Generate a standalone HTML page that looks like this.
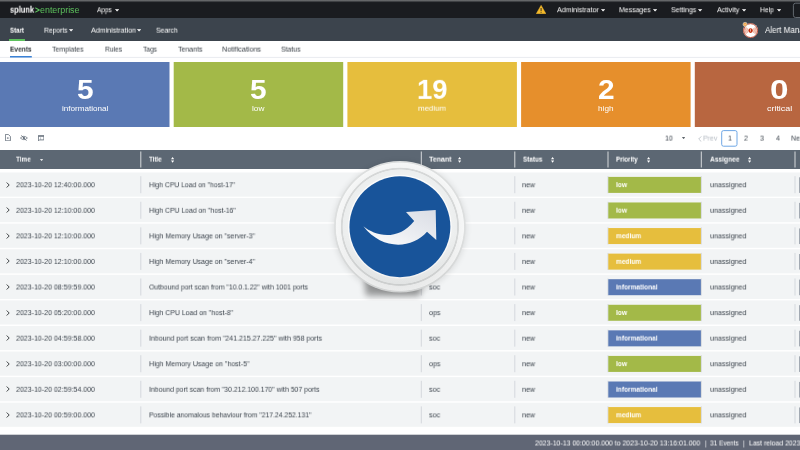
<!DOCTYPE html>
<html lang="en"><head><meta charset="utf-8"><title>Alert Manager</title><style>
html,body{margin:0;padding:0}
body{width:800px;height:450px;overflow:hidden;position:relative;background:#fff;font-family:"Liberation Sans",sans-serif;}
.r{position:absolute;display:block}
.t{position:absolute;white-space:nowrap;line-height:12px;height:12px;font-size:7.5px;transform-origin:0 50%;will-change:transform;}
</style></head>
<body>
<svg class="r" style="left:0;top:0" width="800" height="450" viewBox="0 0 800 450"><defs><linearGradient id="tg" x1="0" y1="0" x2="0" y2="1"><stop offset="0" stop-color="#77797b"/><stop offset="1" stop-color="#25272b"/></linearGradient></defs>
<rect x="0" y="0" width="800" height="18" fill="#1a1c20"/>
<rect x="0" y="0" width="800" height="2.2" fill="url(#tg)"/>
<rect x="793.4" y="3.2" width="12" height="14.3" fill="#1a1c20" rx="2.2" stroke="#6b7278" stroke-width="0.9"/>
<rect x="0" y="18" width="800" height="23" fill="#3c444d"/>
<rect x="9" y="39" width="16" height="2" fill="#5cc05c"/>
<rect x="0" y="41" width="800" height="17" fill="#fff"/>
<rect x="0" y="56.9" width="800" height="1" fill="#e9ecf0"/>
<rect x="10" y="56" width="21.8" height="1.5" fill="#3b82d6"/>
<rect x="0.0" y="62" width="169.5" height="65" fill="#5a79b4"/>
<rect x="173.7" y="62" width="169.5" height="65" fill="#a3b948"/>
<rect x="347.4" y="62" width="169.5" height="65" fill="#e6be3d"/>
<rect x="521.1" y="62" width="169.5" height="65" fill="#e68f2c"/>
<rect x="694.8" y="62" width="169.5" height="65" fill="#b86640"/>
<rect x="721.7" y="130.6" width="15.3" height="15.6" fill="#fff" rx="1.8" stroke="#5f9de2" stroke-width="0.9"/>
<rect x="0" y="150" width="800" height="19" fill="#5c6773"/>
<rect x="140.3" y="151.5" width="1" height="16" fill="rgba(255,255,255,.75)"/>
<rect x="420.8" y="151.5" width="1" height="16" fill="rgba(255,255,255,.75)"/>
<rect x="514.3" y="151.5" width="1" height="16" fill="rgba(255,255,255,.75)"/>
<rect x="607.5" y="151.5" width="1" height="16" fill="rgba(255,255,255,.75)"/>
<rect x="700.8" y="151.5" width="1" height="16" fill="rgba(255,255,255,.75)"/>
<rect x="794.5" y="151.5" width="1" height="16" fill="rgba(255,255,255,.75)"/>
<rect x="0" y="172.5" width="800" height="24.15" fill="#f2f4f5"/>
<rect x="140.3" y="176.2" width="1" height="17" fill="#d4d8dd"/>
<rect x="420.8" y="176.2" width="1" height="17" fill="#d4d8dd"/>
<rect x="514.3" y="176.2" width="1" height="17" fill="#d4d8dd"/>
<rect x="607.5" y="176.2" width="1" height="17" fill="#d4d8dd"/>
<rect x="700.8" y="176.2" width="1" height="17" fill="#d4d8dd"/>
<rect x="794.5" y="176.2" width="1" height="17" fill="#d4d8dd"/>
<rect x="608.3" y="176.9" width="92.6" height="16" fill="#a3b948"/>
<rect x="799.2" y="177.3" width="2" height="15.6" fill="#8f98a3"/>
<rect x="0" y="198.07" width="800" height="24.15" fill="#f2f4f5"/>
<rect x="140.3" y="201.76999999999998" width="1" height="17" fill="#d4d8dd"/>
<rect x="420.8" y="201.76999999999998" width="1" height="17" fill="#d4d8dd"/>
<rect x="514.3" y="201.76999999999998" width="1" height="17" fill="#d4d8dd"/>
<rect x="607.5" y="201.76999999999998" width="1" height="17" fill="#d4d8dd"/>
<rect x="700.8" y="201.76999999999998" width="1" height="17" fill="#d4d8dd"/>
<rect x="794.5" y="201.76999999999998" width="1" height="17" fill="#d4d8dd"/>
<rect x="608.3" y="202.47" width="92.6" height="16" fill="#a3b948"/>
<rect x="799.2" y="202.87" width="2" height="15.6" fill="#8f98a3"/>
<rect x="0" y="223.65" width="800" height="24.15" fill="#f2f4f5"/>
<rect x="140.3" y="227.35" width="1" height="17" fill="#d4d8dd"/>
<rect x="420.8" y="227.35" width="1" height="17" fill="#d4d8dd"/>
<rect x="514.3" y="227.35" width="1" height="17" fill="#d4d8dd"/>
<rect x="607.5" y="227.35" width="1" height="17" fill="#d4d8dd"/>
<rect x="700.8" y="227.35" width="1" height="17" fill="#d4d8dd"/>
<rect x="794.5" y="227.35" width="1" height="17" fill="#d4d8dd"/>
<rect x="608.3" y="228.05" width="92.6" height="16" fill="#e6be3d"/>
<rect x="799.2" y="228.45000000000002" width="2" height="15.6" fill="#8f98a3"/>
<rect x="0" y="249.22" width="800" height="24.15" fill="#f2f4f5"/>
<rect x="140.3" y="252.92000000000002" width="1" height="17" fill="#d4d8dd"/>
<rect x="420.8" y="252.92000000000002" width="1" height="17" fill="#d4d8dd"/>
<rect x="514.3" y="252.92000000000002" width="1" height="17" fill="#d4d8dd"/>
<rect x="607.5" y="252.92000000000002" width="1" height="17" fill="#d4d8dd"/>
<rect x="700.8" y="252.92000000000002" width="1" height="17" fill="#d4d8dd"/>
<rect x="794.5" y="252.92000000000002" width="1" height="17" fill="#d4d8dd"/>
<rect x="608.3" y="253.62" width="92.6" height="16" fill="#e6be3d"/>
<rect x="799.2" y="254.02" width="2" height="15.6" fill="#8f98a3"/>
<rect x="0" y="274.8" width="800" height="24.15" fill="#f2f4f5"/>
<rect x="140.3" y="278.5" width="1" height="17" fill="#d4d8dd"/>
<rect x="420.8" y="278.5" width="1" height="17" fill="#d4d8dd"/>
<rect x="514.3" y="278.5" width="1" height="17" fill="#d4d8dd"/>
<rect x="607.5" y="278.5" width="1" height="17" fill="#d4d8dd"/>
<rect x="700.8" y="278.5" width="1" height="17" fill="#d4d8dd"/>
<rect x="794.5" y="278.5" width="1" height="17" fill="#d4d8dd"/>
<rect x="608.3" y="279.2" width="92.6" height="16" fill="#5a79b4"/>
<rect x="799.2" y="279.6" width="2" height="15.6" fill="#8f98a3"/>
<rect x="0" y="300.38" width="800" height="24.15" fill="#f2f4f5"/>
<rect x="140.3" y="304.08" width="1" height="17" fill="#d4d8dd"/>
<rect x="420.8" y="304.08" width="1" height="17" fill="#d4d8dd"/>
<rect x="514.3" y="304.08" width="1" height="17" fill="#d4d8dd"/>
<rect x="607.5" y="304.08" width="1" height="17" fill="#d4d8dd"/>
<rect x="700.8" y="304.08" width="1" height="17" fill="#d4d8dd"/>
<rect x="794.5" y="304.08" width="1" height="17" fill="#d4d8dd"/>
<rect x="608.3" y="304.78" width="92.6" height="16" fill="#a3b948"/>
<rect x="799.2" y="305.18" width="2" height="15.6" fill="#8f98a3"/>
<rect x="0" y="325.95" width="800" height="24.15" fill="#f2f4f5"/>
<rect x="140.3" y="329.65" width="1" height="17" fill="#d4d8dd"/>
<rect x="420.8" y="329.65" width="1" height="17" fill="#d4d8dd"/>
<rect x="514.3" y="329.65" width="1" height="17" fill="#d4d8dd"/>
<rect x="607.5" y="329.65" width="1" height="17" fill="#d4d8dd"/>
<rect x="700.8" y="329.65" width="1" height="17" fill="#d4d8dd"/>
<rect x="794.5" y="329.65" width="1" height="17" fill="#d4d8dd"/>
<rect x="608.3" y="330.35" width="92.6" height="16" fill="#5a79b4"/>
<rect x="799.2" y="330.75" width="2" height="15.6" fill="#8f98a3"/>
<rect x="0" y="351.52" width="800" height="24.15" fill="#f2f4f5"/>
<rect x="140.3" y="355.21999999999997" width="1" height="17" fill="#d4d8dd"/>
<rect x="420.8" y="355.21999999999997" width="1" height="17" fill="#d4d8dd"/>
<rect x="514.3" y="355.21999999999997" width="1" height="17" fill="#d4d8dd"/>
<rect x="607.5" y="355.21999999999997" width="1" height="17" fill="#d4d8dd"/>
<rect x="700.8" y="355.21999999999997" width="1" height="17" fill="#d4d8dd"/>
<rect x="794.5" y="355.21999999999997" width="1" height="17" fill="#d4d8dd"/>
<rect x="608.3" y="355.92" width="92.6" height="16" fill="#a3b948"/>
<rect x="799.2" y="356.32" width="2" height="15.6" fill="#8f98a3"/>
<rect x="0" y="377.1" width="800" height="24.15" fill="#f2f4f5"/>
<rect x="140.3" y="380.8" width="1" height="17" fill="#d4d8dd"/>
<rect x="420.8" y="380.8" width="1" height="17" fill="#d4d8dd"/>
<rect x="514.3" y="380.8" width="1" height="17" fill="#d4d8dd"/>
<rect x="607.5" y="380.8" width="1" height="17" fill="#d4d8dd"/>
<rect x="700.8" y="380.8" width="1" height="17" fill="#d4d8dd"/>
<rect x="794.5" y="380.8" width="1" height="17" fill="#d4d8dd"/>
<rect x="608.3" y="381.5" width="92.6" height="16" fill="#5a79b4"/>
<rect x="799.2" y="381.90000000000003" width="2" height="15.6" fill="#8f98a3"/>
<rect x="0" y="402.67" width="800" height="24.15" fill="#f2f4f5"/>
<rect x="140.3" y="406.37" width="1" height="17" fill="#d4d8dd"/>
<rect x="420.8" y="406.37" width="1" height="17" fill="#d4d8dd"/>
<rect x="514.3" y="406.37" width="1" height="17" fill="#d4d8dd"/>
<rect x="607.5" y="406.37" width="1" height="17" fill="#d4d8dd"/>
<rect x="700.8" y="406.37" width="1" height="17" fill="#d4d8dd"/>
<rect x="794.5" y="406.37" width="1" height="17" fill="#d4d8dd"/>
<rect x="608.3" y="407.07" width="92.6" height="16" fill="#e6be3d"/>
<rect x="799.2" y="407.47" width="2" height="15.6" fill="#8f98a3"/>
<rect x="0" y="434.7" width="800" height="16" fill="#606675"/>
</svg>
<div class="t " style="left:10.2px;top:3px;transform:translateY(0.65px) scaleX(0.8757);font-size:8.5px;color:#fff;font-weight:700;">splunk</div>
<svg class="r" style="left:35px;top:7px" width="5" height="6" viewBox="0 0 5 6"><path d="M0.3 0.3L4.7 2.6V3.4L0.3 5.7V4.5L3.2 3L0.3 1.5z" fill="#5cc05c"/></svg>
<div class="t " style="left:40px;top:3px;transform:translateY(0.68px) scaleX(1.0446);font-size:8.5px;color:#5cc05c;font-weight:400;">enterprise</div>
<div class="t " style="left:97px;top:4px;transform:translateY(0.2px) scaleX(0.8621);font-size:7.5px;color:#fff;">Apps</div>
<svg class="r" style="left:114.9px;top:9.0px" width="4.2" height="2.6" viewBox="0 0 4.2 2.6"><path d="M0.5 0.4h3.2L2.1 2.2z" fill="#fff" stroke="#fff" stroke-width="0.6" stroke-linejoin="round"/></svg>
<svg class="r" style="left:536px;top:4.6px" width="10.2" height="9" viewBox="0 0 10.2 9"><path d="M5.1 0.2L10 8.8H0.2z" fill="#f4b92a" stroke="#f4b92a" stroke-width="0.4" stroke-linejoin="round"/><path d="M4.6 3h1v3H4.6zM4.6 6.7h1v1H4.6z" fill="#3a3320"/></svg>
<div class="t " style="left:556.8px;top:4px;transform:translateY(0.2px) scaleX(0.946);font-size:7.5px;color:#fff;">Administrator</div>
<svg class="r" style="left:601.1px;top:9.0px" width="4.2" height="2.6" viewBox="0 0 4.2 2.6"><path d="M0.5 0.4h3.2L2.1 2.2z" fill="#fff" stroke="#fff" stroke-width="0.6" stroke-linejoin="round"/></svg>
<div class="t " style="left:619.2px;top:4px;transform:translateY(0.2px) scaleX(0.9243);font-size:7.5px;color:#fff;">Messages</div>
<svg class="r" style="left:652.8px;top:9.0px" width="4.2" height="2.6" viewBox="0 0 4.2 2.6"><path d="M0.5 0.4h3.2L2.1 2.2z" fill="#fff" stroke="#fff" stroke-width="0.6" stroke-linejoin="round"/></svg>
<div class="t " style="left:671.2px;top:4px;transform:translateY(0.2px) scaleX(0.9333);font-size:7.5px;color:#fff;">Settings</div>
<svg class="r" style="left:698.4px;top:9.0px" width="4.2" height="2.6" viewBox="0 0 4.2 2.6"><path d="M0.5 0.4h3.2L2.1 2.2z" fill="#fff" stroke="#fff" stroke-width="0.6" stroke-linejoin="round"/></svg>
<div class="t " style="left:716.9px;top:4px;transform:translateY(0.2px) scaleX(0.9341);font-size:7.5px;color:#fff;">Activity</div>
<svg class="r" style="left:741.6999999999999px;top:9.0px" width="4.2" height="2.6" viewBox="0 0 4.2 2.6"><path d="M0.5 0.4h3.2L2.1 2.2z" fill="#fff" stroke="#fff" stroke-width="0.6" stroke-linejoin="round"/></svg>
<div class="t " style="left:760px;top:4px;transform:translateY(0.2px) scaleX(0.8939);font-size:7.5px;color:#fff;">Help</div>
<svg class="r" style="left:776.6px;top:9.0px" width="4.2" height="2.6" viewBox="0 0 4.2 2.6"><path d="M0.5 0.4h3.2L2.1 2.2z" fill="#fff" stroke="#fff" stroke-width="0.6" stroke-linejoin="round"/></svg>
<div class="t " style="left:10.2px;top:24px;transform:translateY(0.65px) scaleX(0.819);font-size:7.5px;color:#fff;font-weight:700;">Start</div>
<div class="t " style="left:44px;top:24px;transform:translateY(0.65px) scaleX(0.8947);font-size:7.5px;color:#fff;">Reports</div>
<svg class="r" style="left:69.10000000000001px;top:29.4px" width="4.2" height="2.6" viewBox="0 0 4.2 2.6"><path d="M0.5 0.4h3.2L2.1 2.2z" fill="#fff" stroke="#fff" stroke-width="0.6" stroke-linejoin="round"/></svg>
<div class="t " style="left:90.7px;top:24px;transform:translateY(0.65px) scaleX(0.9467);font-size:7.5px;color:#fff;">Administration</div>
<svg class="r" style="left:136.9px;top:29.4px" width="4.2" height="2.6" viewBox="0 0 4.2 2.6"><path d="M0.5 0.4h3.2L2.1 2.2z" fill="#fff" stroke="#fff" stroke-width="0.6" stroke-linejoin="round"/></svg>
<div class="t " style="left:156.2px;top:24px;transform:translateY(0.65px) scaleX(0.9173);font-size:7.5px;color:#fff;">Search</div>
<svg class="r" style="left:741px;top:21px" width="19" height="19" viewBox="0 0 19 19">
<circle cx="9.6" cy="9.6" r="7.4" fill="#fff"/>
<path d="M9.6 9.6L3.9 5.4A7 7 0 0 0 3.9 13.8zM9.6 9.6L15.3 5.4A7 7 0 0 1 15.3 13.8z" fill="#f6d5cb"/>
<path d="M5.3 6.4A5.3 5.3 0 0 0 5.3 12.8M13.9 6.4A5.3 5.3 0 0 1 13.9 12.8M6.7 7.4A3.6 3.6 0 0 0 6.7 11.8M12.5 7.4A3.6 3.6 0 0 1 12.5 11.8" fill="none" stroke="#e29c88" stroke-width="0.7"/>
<circle cx="9.6" cy="9.6" r="6.95" fill="none" stroke="#b5402a" stroke-width="0.95"/>
<ellipse cx="9.6" cy="9.6" rx="2.1" ry="2.3" fill="#c6300f"/>
<rect x="9.3" y="8.1" width="0.6" height="1.9" fill="#fff"/><rect x="9.3" y="10.4" width="0.6" height="0.6" fill="#fff"/>
<circle cx="4.1" cy="3.4" r="2.1" fill="#f2a64a" stroke="#cfd5db" stroke-width="0.6"/>
<path d="M3.2 3.4L3.9 4.1L5.1 2.8" fill="none" stroke="#fbe3c3" stroke-width="0.5"/>
</svg>
<div class="t " style="left:765px;top:23px;transform:translateY(0.88px) scaleX(0.944);font-size:8.5px;color:#fff;">Alert Manager</div>
<div class="t " style="left:10.2px;top:43px;transform:translateY(0.6px) scaleX(0.8737);font-size:7.5px;color:#2b3033;font-weight:700;">Events</div>
<div class="t " style="left:52.4px;top:43px;transform:translateY(0.6px) scaleX(0.9214);font-size:7.5px;color:#333a41;">Templates</div>
<div class="t " style="left:104.7px;top:43px;transform:translateY(0.6px) scaleX(0.886);font-size:7.5px;color:#333a41;">Rules</div>
<div class="t " style="left:142.7px;top:43px;transform:translateY(0.6px) scaleX(0.8836);font-size:7.5px;color:#333a41;">Tags</div>
<div class="t " style="left:177.6px;top:43px;transform:translateY(0.6px) scaleX(0.9322);font-size:7.5px;color:#333a41;">Tenants</div>
<div class="t " style="left:222px;top:43px;transform:translateY(0.6px) scaleX(0.9545);font-size:7.5px;color:#333a41;">Notifications</div>
<div class="t " style="left:281.4px;top:43px;transform:translateY(0.6px) scaleX(0.9217);font-size:7.5px;color:#333a41;">Status</div>
<div class="t " style="left:76.6px;top:83px;transform:translateY(0.82px) scaleX(1.0852);font-size:27.5px;color:#fff;font-weight:700;">5</div>
<div class="t " style="left:61.7px;top:102px;transform:translateY(0.7px) scaleX(1.0128);font-size:8px;color:#fff;font-weight:400;">informational</div>
<div class="t " style="left:250.3px;top:83px;transform:translateY(0.82px) scaleX(1.0852);font-size:27.5px;color:#fff;font-weight:700;">5</div>
<div class="t " style="left:252.4px;top:102px;transform:translateY(0.7px) scaleX(1.032);font-size:8px;color:#fff;font-weight:400;">low</div>
<div class="t " style="left:417.05px;top:83px;transform:translateY(0.82px) scaleX(0.9969);font-size:27.5px;color:#fff;font-weight:700;">19</div>
<div class="t " style="left:418.3px;top:102px;transform:translateY(0.7px) scaleX(0.9841);font-size:8px;color:#fff;font-weight:400;">medium</div>
<div class="t " style="left:597.7px;top:83px;transform:translateY(0.82px) scaleX(1.0852);font-size:27.5px;color:#fff;font-weight:700;">2</div>
<div class="t " style="left:598.25px;top:102px;transform:translateY(0.7px) scaleX(1.0248);font-size:8px;color:#fff;font-weight:400;">high</div>
<div class="t " style="left:770.45px;top:83px;transform:translateY(0.82px) scaleX(1.2094);font-size:27.5px;color:#fff;font-weight:700;">0</div>
<div class="t " style="left:767.1px;top:102px;transform:translateY(0.7px) scaleX(1.1115);font-size:8px;color:#fff;font-weight:400;">critical</div>
<svg class="r" style="left:5px;top:134.2px" width="5.8" height="7.2" viewBox="0 0 5.8 7.2"><path d="M0.4 0.4H3.3L5.4 2.5V6.8H0.4z" fill="none" stroke="#5c6773" stroke-width="0.8" stroke-linejoin="round"/><path d="M2.8 3.2v1.8M1.9 4.1h1.8" stroke="#5c6773" stroke-width="0.6"/></svg>
<svg class="r" style="left:20.3px;top:135px" width="7.8" height="6" viewBox="0 0 7.8 6"><path d="M0.4 3Q3.9 -0.4 7.4 3Q3.9 6.4 0.4 3z" fill="none" stroke="#5c6773" stroke-width="0.7"/><circle cx="3.9" cy="3" r="1.1" fill="#5c6773"/><path d="M1.3 0.3L6.6 5.8" stroke="#5c6773" stroke-width="0.7"/></svg>
<svg class="r" style="left:37.8px;top:135px" width="6.4" height="6.4" viewBox="0 0 6.4 6.4"><path d="M0.4 0.4H5.9V4.9H1.7L0.4 6V0.4z" fill="none" stroke="#5c6773" stroke-width="0.8" stroke-linejoin="round"/><path d="M0.4 1.3H5.9" stroke="#5c6773" stroke-width="0.9"/><path d="M2.6 2.3V4.6" stroke="#5c6773" stroke-width="0.4"/></svg>
<div class="t " style="left:665px;top:132px;transform:translateY(0.6px) scaleX(0.92);font-size:7.5px;color:#3c444d;">10</div>
<svg class="r" style="left:681.9px;top:137.4px" width="3.2" height="2" viewBox="0 0 3.2 2"><path d="M0.3 0.3h2.6L1.6 1.8z" fill="#3c444d" stroke="#3c444d" stroke-width="0.4" stroke-linejoin="round"/></svg>
<svg class="r" style="left:698px;top:135.5px" width="4" height="6" viewBox="0 0 4 6"><path d="M3.3 0.4L0.7 3L3.3 5.6" fill="none" stroke="#b6bcc4" stroke-width="0.8"/></svg>
<div class="t " style="left:703px;top:132px;transform:translateY(0.6px) scaleX(0.92);font-size:7.5px;color:#b6bcc4;">Prev</div>
<div class="t " style="left:727.5px;top:132px;transform:translateY(0.6px) scaleX(0.92);font-size:7.5px;color:#3c444d;">1</div>
<div class="t " style="left:743.5px;top:132px;transform:translateY(0.6px) scaleX(0.92);font-size:7.5px;color:#3c444d;">2</div>
<div class="t " style="left:760px;top:132px;transform:translateY(0.6px) scaleX(0.92);font-size:7.5px;color:#3c444d;">3</div>
<div class="t " style="left:776px;top:132px;transform:translateY(0.6px) scaleX(0.92);font-size:7.5px;color:#3c444d;">4</div>
<div class="t " style="left:791px;top:132px;transform:translateY(0.6px) scaleX(0.92);font-size:7.5px;color:#3c444d;">Next</div>
<div class="t " style="left:16.25px;top:153px;transform:translateY(0.6px) scaleX(0.8489);font-size:7.5px;color:#fff;font-weight:700;">Time</div>
<svg class="r" style="left:39.8px;top:158.7px" width="3.2" height="2" viewBox="0 0 3.2 2"><path d="M0.3 0.3h2.6L1.6 1.8z" fill="#fff" stroke="#fff" stroke-width="0.4" stroke-linejoin="round"/></svg>
<div class="t " style="left:149.25px;top:153px;transform:translateY(0.6px) scaleX(0.8335);font-size:7.5px;color:#fff;font-weight:700;">Title</div>
<svg class="r" style="left:170.70000000000002px;top:156.9px" width="3.2" height="5.8" viewBox="0 0 3.2 5.8"><path d="M0 2.3h3.2L1.6 0zM0 3.5h3.2L1.6 5.8z" fill="#fff"/></svg>
<div class="t " style="left:429px;top:153px;transform:translateY(0.6px) scaleX(0.9363);font-size:7.5px;color:#fff;font-weight:700;">Tenant</div>
<svg class="r" style="left:458.4px;top:156.9px" width="3.2" height="5.8" viewBox="0 0 3.2 5.8"><path d="M0 2.3h3.2L1.6 0zM0 3.5h3.2L1.6 5.8z" fill="#fff"/></svg>
<div class="t " style="left:522.8px;top:153px;transform:translateY(0.6px) scaleX(0.8464);font-size:7.5px;color:#fff;font-weight:700;">Status</div>
<svg class="r" style="left:550.9px;top:156.9px" width="3.2" height="5.8" viewBox="0 0 3.2 5.8"><path d="M0 2.3h3.2L1.6 0zM0 3.5h3.2L1.6 5.8z" fill="#fff"/></svg>
<div class="t " style="left:616.25px;top:153px;transform:translateY(0.6px) scaleX(0.8281);font-size:7.5px;color:#fff;font-weight:700;">Priority</div>
<svg class="r" style="left:646.6999999999999px;top:156.9px" width="3.2" height="5.8" viewBox="0 0 3.2 5.8"><path d="M0 2.3h3.2L1.6 0zM0 3.5h3.2L1.6 5.8z" fill="#fff"/></svg>
<div class="t " style="left:709.5px;top:153px;transform:translateY(0.6px) scaleX(0.8843);font-size:7.5px;color:#fff;font-weight:700;">Assignee</div>
<svg class="r" style="left:747.5px;top:156.9px" width="3.2" height="5.8" viewBox="0 0 3.2 5.8"><path d="M0 2.3h3.2L1.6 0zM0 3.5h3.2L1.6 5.8z" fill="#fff"/></svg>
<svg class="r" style="left:5.5px;top:181.7px" width="4" height="6" viewBox="0 0 4 6"><path d="M0.7 0.5L3.2 3L0.7 5.5" fill="none" stroke="#2b3033" stroke-width="0.9"/></svg>
<div class="t " style="left:16.3px;top:179px;transform:translateY(0.2px) scaleX(0.9377);font-size:7.5px;color:#3c444d;">2023-10-20 12:40:00.000</div>
<div class="t " style="left:149px;top:179px;transform:translateY(0.2px) scaleX(0.9066);font-size:7.5px;color:#3c444d;">High CPU Load on &quot;host-17&quot;</div>
<div class="t " style="left:522px;top:179px;transform:translateY(0.2px) scaleX(0.95);font-size:7.5px;color:#3c444d;">new</div>
<div class="t " style="left:616.2px;top:179px;transform:translateY(0.1px) scaleX(0.875);font-size:7.5px;color:#fff;font-weight:700;">low</div>
<div class="t " style="left:709.5px;top:179px;transform:translateY(0.2px) scaleX(0.95);font-size:7.5px;color:#3c444d;">unassigned</div>
<svg class="r" style="left:5.5px;top:207.26999999999998px" width="4" height="6" viewBox="0 0 4 6"><path d="M0.7 0.5L3.2 3L0.7 5.5" fill="none" stroke="#2b3033" stroke-width="0.9"/></svg>
<div class="t " style="left:16.3px;top:204px;transform:translateY(0.77px) scaleX(0.9377);font-size:7.5px;color:#3c444d;">2023-10-20 12:10:00.000</div>
<div class="t " style="left:149px;top:204px;transform:translateY(0.77px) scaleX(0.9129);font-size:7.5px;color:#3c444d;">High CPU Load on &quot;host-16&quot;</div>
<div class="t " style="left:522px;top:204px;transform:translateY(0.77px) scaleX(0.95);font-size:7.5px;color:#3c444d;">new</div>
<div class="t " style="left:616.2px;top:204px;transform:translateY(0.67px) scaleX(0.875);font-size:7.5px;color:#fff;font-weight:700;">low</div>
<div class="t " style="left:709.5px;top:204px;transform:translateY(0.77px) scaleX(0.95);font-size:7.5px;color:#3c444d;">unassigned</div>
<svg class="r" style="left:5.5px;top:232.85px" width="4" height="6" viewBox="0 0 4 6"><path d="M0.7 0.5L3.2 3L0.7 5.5" fill="none" stroke="#2b3033" stroke-width="0.9"/></svg>
<div class="t " style="left:16.3px;top:230px;transform:translateY(0.35px) scaleX(0.9377);font-size:7.5px;color:#3c444d;">2023-10-20 12:10:00.000</div>
<div class="t " style="left:149px;top:230px;transform:translateY(0.35px) scaleX(0.9331);font-size:7.5px;color:#3c444d;">High Memory Usage on &quot;server-3&quot;</div>
<div class="t " style="left:522px;top:230px;transform:translateY(0.35px) scaleX(0.95);font-size:7.5px;color:#3c444d;">new</div>
<div class="t " style="left:616.2px;top:230px;transform:translateY(0.25px) scaleX(0.875);font-size:7.5px;color:#fff;font-weight:700;">medium</div>
<div class="t " style="left:709.5px;top:230px;transform:translateY(0.35px) scaleX(0.95);font-size:7.5px;color:#3c444d;">unassigned</div>
<svg class="r" style="left:5.5px;top:258.42px" width="4" height="6" viewBox="0 0 4 6"><path d="M0.7 0.5L3.2 3L0.7 5.5" fill="none" stroke="#2b3033" stroke-width="0.9"/></svg>
<div class="t " style="left:16.3px;top:255px;transform:translateY(0.92px) scaleX(0.9377);font-size:7.5px;color:#3c444d;">2023-10-20 12:10:00.000</div>
<div class="t " style="left:149px;top:255px;transform:translateY(0.92px) scaleX(0.9331);font-size:7.5px;color:#3c444d;">High Memory Usage on &quot;server-4&quot;</div>
<div class="t " style="left:522px;top:255px;transform:translateY(0.92px) scaleX(0.95);font-size:7.5px;color:#3c444d;">new</div>
<div class="t " style="left:616.2px;top:255px;transform:translateY(0.82px) scaleX(0.875);font-size:7.5px;color:#fff;font-weight:700;">medium</div>
<div class="t " style="left:709.5px;top:255px;transform:translateY(0.92px) scaleX(0.95);font-size:7.5px;color:#3c444d;">unassigned</div>
<svg class="r" style="left:5.5px;top:284.0px" width="4" height="6" viewBox="0 0 4 6"><path d="M0.7 0.5L3.2 3L0.7 5.5" fill="none" stroke="#2b3033" stroke-width="0.9"/></svg>
<div class="t " style="left:16.3px;top:281px;transform:translateY(0.5px) scaleX(0.9377);font-size:7.5px;color:#3c444d;">2023-10-20 08:59:59.000</div>
<div class="t " style="left:149px;top:281px;transform:translateY(0.5px) scaleX(0.9106);font-size:7.5px;color:#3c444d;">Outbound port scan from &quot;10.0.1.22&quot; with 1001 ports</div>
<div class="t " style="left:429px;top:281px;transform:translateY(0.5px) scaleX(0.95);font-size:7.5px;color:#3c444d;">soc</div>
<div class="t " style="left:522px;top:281px;transform:translateY(0.5px) scaleX(0.95);font-size:7.5px;color:#3c444d;">new</div>
<div class="t " style="left:616.2px;top:281px;transform:translateY(0.4px) scaleX(0.875);font-size:7.5px;color:#fff;font-weight:700;">informational</div>
<div class="t " style="left:709.5px;top:281px;transform:translateY(0.5px) scaleX(0.95);font-size:7.5px;color:#3c444d;">unassigned</div>
<svg class="r" style="left:5.5px;top:309.58px" width="4" height="6" viewBox="0 0 4 6"><path d="M0.7 0.5L3.2 3L0.7 5.5" fill="none" stroke="#2b3033" stroke-width="0.9"/></svg>
<div class="t " style="left:16.3px;top:307px;transform:translateY(0.08px) scaleX(0.9377);font-size:7.5px;color:#3c444d;">2023-10-20 05:20:00.000</div>
<div class="t " style="left:149px;top:307px;transform:translateY(0.08px) scaleX(0.9251);font-size:7.5px;color:#3c444d;">High CPU Load on &quot;host-8&quot;</div>
<div class="t " style="left:429px;top:307px;transform:translateY(0.08px) scaleX(0.95);font-size:7.5px;color:#3c444d;">ops</div>
<div class="t " style="left:522px;top:307px;transform:translateY(0.08px) scaleX(0.95);font-size:7.5px;color:#3c444d;">new</div>
<div class="t " style="left:616.2px;top:306px;transform:translateY(0.98px) scaleX(0.875);font-size:7.5px;color:#fff;font-weight:700;">low</div>
<div class="t " style="left:709.5px;top:307px;transform:translateY(0.08px) scaleX(0.95);font-size:7.5px;color:#3c444d;">unassigned</div>
<svg class="r" style="left:5.5px;top:335.15px" width="4" height="6" viewBox="0 0 4 6"><path d="M0.7 0.5L3.2 3L0.7 5.5" fill="none" stroke="#2b3033" stroke-width="0.9"/></svg>
<div class="t " style="left:16.3px;top:332px;transform:translateY(0.65px) scaleX(0.9377);font-size:7.5px;color:#3c444d;">2023-10-20 04:59:58.000</div>
<div class="t " style="left:149px;top:332px;transform:translateY(0.65px) scaleX(0.9329);font-size:7.5px;color:#3c444d;">Inbound port scan from &quot;241.215.27.225&quot; with 958 ports</div>
<div class="t " style="left:429px;top:332px;transform:translateY(0.65px) scaleX(0.95);font-size:7.5px;color:#3c444d;">soc</div>
<div class="t " style="left:522px;top:332px;transform:translateY(0.65px) scaleX(0.95);font-size:7.5px;color:#3c444d;">new</div>
<div class="t " style="left:616.2px;top:332px;transform:translateY(0.55px) scaleX(0.875);font-size:7.5px;color:#fff;font-weight:700;">informational</div>
<div class="t " style="left:709.5px;top:332px;transform:translateY(0.65px) scaleX(0.95);font-size:7.5px;color:#3c444d;">unassigned</div>
<svg class="r" style="left:5.5px;top:360.71999999999997px" width="4" height="6" viewBox="0 0 4 6"><path d="M0.7 0.5L3.2 3L0.7 5.5" fill="none" stroke="#2b3033" stroke-width="0.9"/></svg>
<div class="t " style="left:16.3px;top:358px;transform:translateY(0.22px) scaleX(0.9377);font-size:7.5px;color:#3c444d;">2023-10-20 03:00:00.000</div>
<div class="t " style="left:149px;top:358px;transform:translateY(0.22px) scaleX(0.9388);font-size:7.5px;color:#3c444d;">High Memory Usage on &quot;host-5&quot;</div>
<div class="t " style="left:429px;top:358px;transform:translateY(0.22px) scaleX(0.95);font-size:7.5px;color:#3c444d;">ops</div>
<div class="t " style="left:522px;top:358px;transform:translateY(0.22px) scaleX(0.95);font-size:7.5px;color:#3c444d;">new</div>
<div class="t " style="left:616.2px;top:358px;transform:translateY(0.12px) scaleX(0.875);font-size:7.5px;color:#fff;font-weight:700;">low</div>
<div class="t " style="left:709.5px;top:358px;transform:translateY(0.22px) scaleX(0.95);font-size:7.5px;color:#3c444d;">unassigned</div>
<svg class="r" style="left:5.5px;top:386.3px" width="4" height="6" viewBox="0 0 4 6"><path d="M0.7 0.5L3.2 3L0.7 5.5" fill="none" stroke="#2b3033" stroke-width="0.9"/></svg>
<div class="t " style="left:16.3px;top:383px;transform:translateY(0.8px) scaleX(0.9377);font-size:7.5px;color:#3c444d;">2023-10-20 02:59:54.000</div>
<div class="t " style="left:149px;top:383px;transform:translateY(0.8px) scaleX(0.9194);font-size:7.5px;color:#3c444d;">Inbound port scan from &quot;30.212.100.170&quot; with 507 ports</div>
<div class="t " style="left:429px;top:383px;transform:translateY(0.8px) scaleX(0.95);font-size:7.5px;color:#3c444d;">soc</div>
<div class="t " style="left:522px;top:383px;transform:translateY(0.8px) scaleX(0.95);font-size:7.5px;color:#3c444d;">new</div>
<div class="t " style="left:616.2px;top:383px;transform:translateY(0.7px) scaleX(0.875);font-size:7.5px;color:#fff;font-weight:700;">informational</div>
<div class="t " style="left:709.5px;top:383px;transform:translateY(0.8px) scaleX(0.95);font-size:7.5px;color:#3c444d;">unassigned</div>
<svg class="r" style="left:5.5px;top:411.87px" width="4" height="6" viewBox="0 0 4 6"><path d="M0.7 0.5L3.2 3L0.7 5.5" fill="none" stroke="#2b3033" stroke-width="0.9"/></svg>
<div class="t " style="left:16.3px;top:409px;transform:translateY(0.37px) scaleX(0.9377);font-size:7.5px;color:#3c444d;">2023-10-20 00:59:00.000</div>
<div class="t " style="left:149px;top:409px;transform:translateY(0.37px) scaleX(0.9089);font-size:7.5px;color:#3c444d;">Possible anomalous behaviour from &quot;217.24.252.131&quot;</div>
<div class="t " style="left:429px;top:409px;transform:translateY(0.37px) scaleX(0.95);font-size:7.5px;color:#3c444d;">soc</div>
<div class="t " style="left:522px;top:409px;transform:translateY(0.37px) scaleX(0.95);font-size:7.5px;color:#3c444d;">new</div>
<div class="t " style="left:616.2px;top:409px;transform:translateY(0.27px) scaleX(0.875);font-size:7.5px;color:#fff;font-weight:700;">medium</div>
<div class="t " style="left:709.5px;top:409px;transform:translateY(0.37px) scaleX(0.95);font-size:7.5px;color:#3c444d;">unassigned</div>
<div class="t " style="left:534.7px;top:437px;transform:translateY(0.5px) scaleX(0.9234);font-size:7.5px;color:#fff;">2023-10-13 00:00:00.000 to 2023-10-20 13:16:01.000</div>
<div class="t " style="left:704.8px;top:437px;transform:translateY(0.5px) scaleX(0.8);font-size:7px;color:#fff;">|</div>
<div class="t " style="left:710px;top:437px;transform:translateY(0.5px) scaleX(0.8618);font-size:7.5px;color:#fff;">31 Events</div>
<div class="t " style="left:743.3px;top:437px;transform:translateY(0.5px) scaleX(0.8);font-size:7px;color:#fff;">|</div>
<div class="t " style="left:748.6px;top:437px;transform:translateY(0.5px) scaleX(0.92);font-size:7.5px;color:#fff;">Last reload 2023-10-20 13:16:02</div>
<svg class="r" style="left:320px;top:147px" width="160" height="170" viewBox="0 0 160 170">
<defs>
<radialGradient id="sh" cx="50%" cy="50%" r="50%"><stop offset="0" stop-color="#000" stop-opacity=".30"/><stop offset=".55" stop-color="#000" stop-opacity=".16"/><stop offset="1" stop-color="#000" stop-opacity="0"/></radialGradient>
<radialGradient id="ring" cx="50%" cy="50%" r="50%"><stop offset=".76" stop-color="#fcfcfc"/><stop offset=".782" stop-color="#fbfbfb"/><stop offset=".792" stop-color="#eef0f0"/><stop offset=".866" stop-color="#eceeee"/><stop offset=".876" stop-color="#d4d6d6"/><stop offset=".892" stop-color="#d7d9d9"/><stop offset=".902" stop-color="#f3f4f4"/><stop offset=".968" stop-color="#f6f7f7"/><stop offset=".98" stop-color="#dddfdf"/><stop offset="1" stop-color="#dbdddd"/></radialGradient>
<linearGradient id="ar" x1="0" y1="1" x2="1" y2="0"><stop offset="0" stop-color="#ffffff"/><stop offset=".45" stop-color="#eceef2"/><stop offset="1" stop-color="#dadde5"/></linearGradient>
<linearGradient id="rsh" x1="0" y1="0" x2="0" y2="1"><stop offset=".55" stop-color="#000" stop-opacity="0"/><stop offset="1" stop-color="#000" stop-opacity=".05"/></linearGradient>
<filter id="bl" x="-20%" y="-20%" width="140%" height="140%"><feGaussianBlur stdDeviation="3"/></filter>
</defs>
<rect x="45" y="128" width="56" height="21" rx="4" fill="#000" opacity=".36" filter="url(#bl)"/>
<circle cx="79.9" cy="80.75" r="66.3" fill="#000" opacity=".10" filter="url(#bl)"/>
<circle cx="79.9" cy="79.75" r="65.8" fill="url(#ring)"/>
<circle cx="79.9" cy="79.75" r="65.8" fill="url(#rsh)"/>
<circle cx="79.9" cy="79.75" r="50.45" fill="#18549a"/>
<path d="M43.7 79.5 C55 89 78 95 94.5 74.1 L86.3 65.1 L116 63.2 L116.6 93.1 L107.3 85 C92 102.5 62 103.5 43.7 79.5z" fill="url(#ar)" transform="translate(-0.3 -0.2)"/>
</svg>
</body></html>
